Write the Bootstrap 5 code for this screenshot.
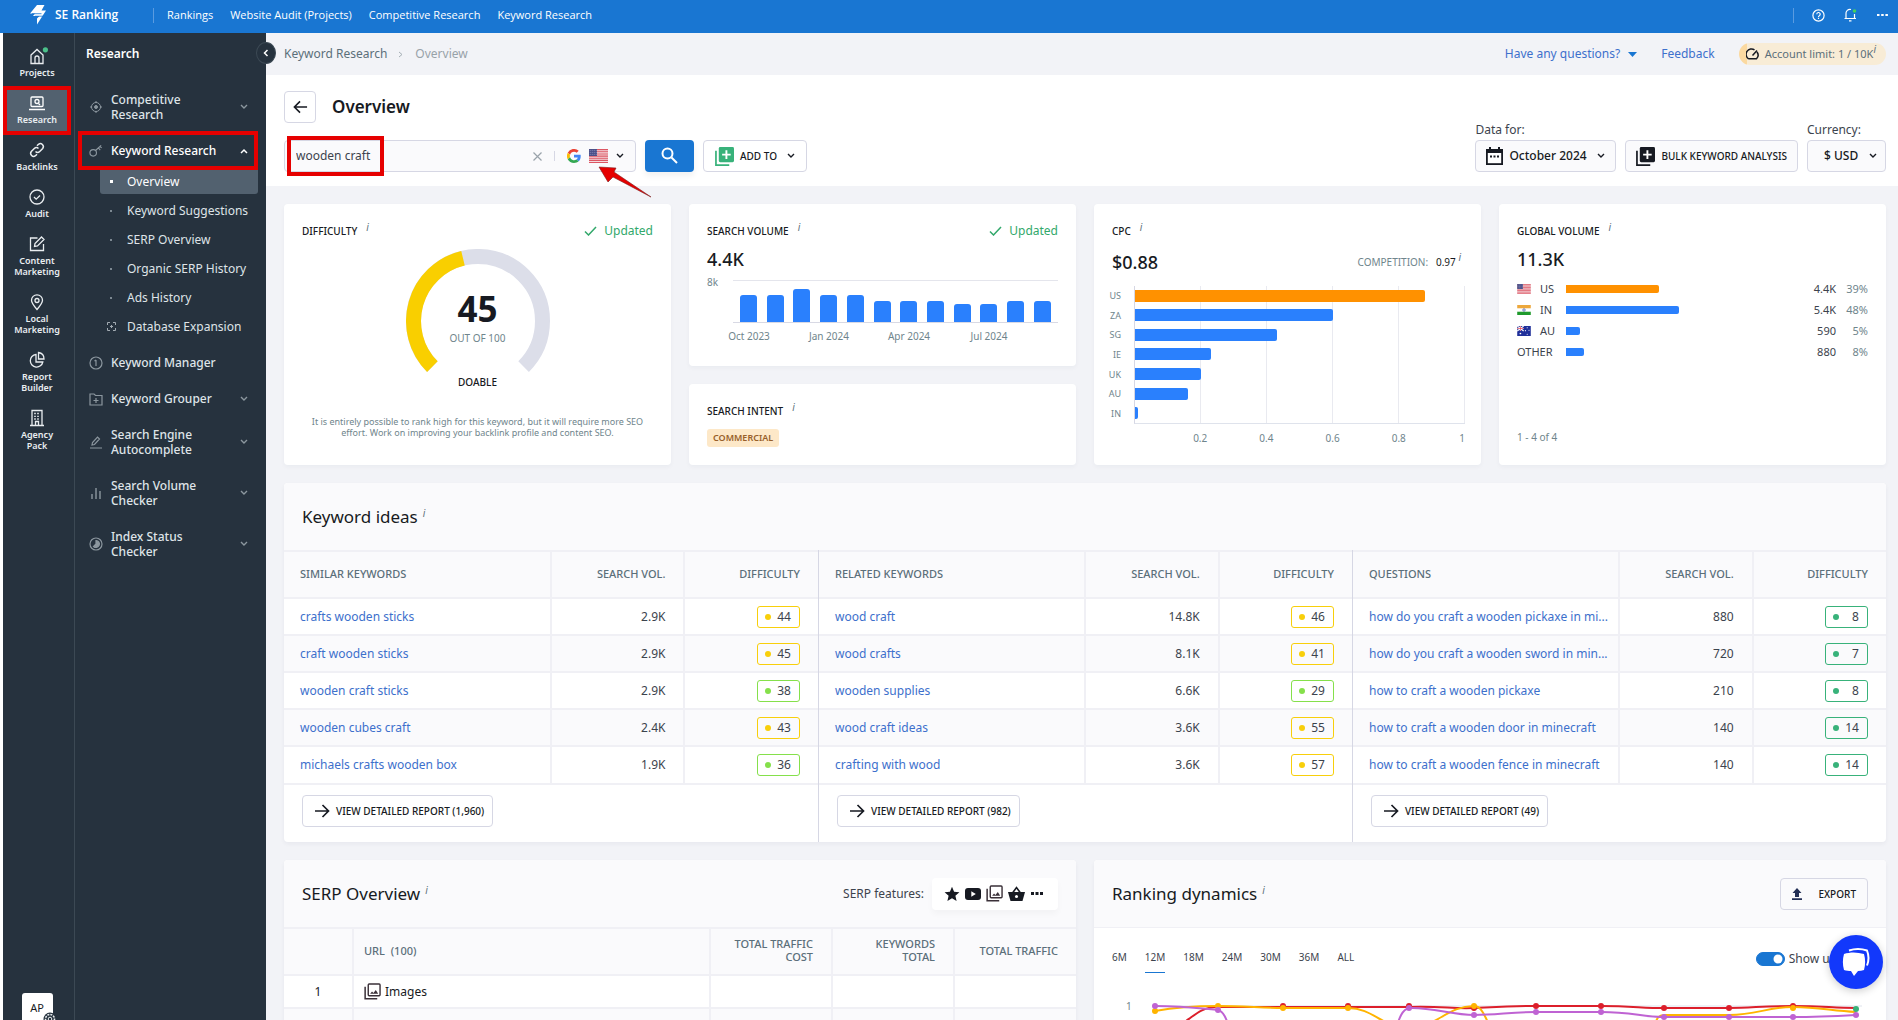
<!DOCTYPE html>
<html lang="en">
<head>
<meta charset="utf-8">
<meta name="viewport" content="width=device-width, initial-scale=1">
<title>Keyword Research – Overview</title>
<link href="https://cdn.jsdelivr.net/npm/bootstrap@5.3.0/dist/css/bootstrap.min.css" rel="stylesheet">
<style>
:root{--ink:#171a22;--slate:#5b6f7a;--line:#f0f0f5;--edge:#d6d7e4;--brand:#1976d2;--side:#26323e;--pale:#fafafc;--mark:#e60000}
html,body{height:100%}
body{font-family:"Noto Sans","Open Sans",sans-serif;font-size:12px;line-height:16px;color:var(--ink);background:#fff;overflow:hidden}
a{text-decoration:none}
svg{flex:none;display:block}
.app{height:100vh}
.shell{min-height:0;padding-left:3px}
.topbar{height:33px;background:var(--brand);font-family:"Open Sans",sans-serif;font-size:11px;font-weight:500;padding:0 10px 3px 30px}
.topbar a{color:#fff}
.brand{font-size:12px;line-height:18px;font-weight:600;width:123px}
.vline{width:1px;height:15px;background:#5a9be0}
.topnav{gap:17px;margin-left:13px}
.toptools{gap:18px}
.rail{width:72px;background:var(--side);border-right:1px solid #3c4954;padding:10px 4px 0 1px;gap:6px}
.rail a{color:#e9edf0;font-size:9px;line-height:11px;font-weight:600;text-align:center;padding:4px 0 6px;gap:2px;width:60px}
.rail a.on{background:#52616f;box-shadow:0 0 0 4px var(--mark);position:relative}
.avatar{width:31px;height:31px;background:#fff;color:var(--ink);border-radius:3px;font-size:11px;line-height:30px;text-align:center;margin-bottom:-4px}
.avatar svg{position:absolute;right:-4px;bottom:-2px}
.side{width:191px;background:var(--side);position:relative;font-size:12px;line-height:15px}
.side h2{font-size:12px;line-height:18px;font-weight:600;color:#fff;margin:0;padding:12px 11px 19px}
.side a{color:#dfe4e8;font-weight:500}
.side .grp{display:flex;align-items:center;padding:10px 18px 11px 14px;gap:8px}
.side .sub+.grp{margin-top:6px}
.side .grp>svg{color:#8c979f}
.side .grp>span+svg{margin-left:auto}
.side .grp.on{color:#fff;margin:-2px 8px -1px 3px;padding:0 6px 0 7px;height:39px;border:4px solid var(--mark);position:relative}
.side .grp.on>span+svg{color:#fff}
.side a.sub{display:flex;align-items:center;height:25px;margin:0 8px 4px 25px;font-size:12px;font-weight:400}
.side .sub i{width:27px;display:flex;justify-content:center;padding-right:5px}
.side .sub i::before{content:"";width:2px;height:2px;background:#7d8992}
.side .sub.exp i::before{display:none}
.side a.sub.on{background:#52616f;border-radius:0 0 3px 3px;color:#fff}
.side .sub.on i::before{width:3px;height:3px;background:#fff}
.fold{position:absolute;right:-10px;top:9px;width:20px;height:22px;border-radius:50%;background:var(--side);color:#fff;border:1px solid #3c4954;padding:0;display:flex;align-items:center;justify-content:center;z-index:2}
.main{background:#f2f3f7;min-width:0;overflow:hidden}
.crumbs{height:42px;padding:0 12px 0 18px;font-size:12px;color:#5b6f7a}
.crumbs .dim{color:#98a2a9}
.lnk{color:#3d70cc}
.limit{background:linear-gradient(90deg,#fbd9a0 8px,#f8ecd6 8px);border-radius:11px;height:22px;padding:0 10px 0 7px;font-size:11px;gap:6px}
.tip{font:italic 10px/10px "Noto Sans",sans-serif;color:var(--slate)}
.pagehead{background:#fff;padding:16px 12px 14px 18px}
.pagehead h1{font-size:17px;line-height:24px;font-weight:600;margin:0}
.tools{gap:9px}
.ctl{height:32px;border:1px solid var(--edge);border-radius:4px;background:#fff;display:flex;align-items:center;color:var(--ink);font-size:10px;font-weight:500;padding:0 11px;gap:6px;white-space:nowrap}
.ctl.soft{background:var(--pale)}
.ctl.month{padding:0 10px}
.ctl.back{width:32px;padding:0;justify-content:center}
.ctl.report{padding:0 8px 0 11px}
.ctl select,.ctl input{border:0;background:transparent;outline:0;font-size:12px;color:var(--ink);padding:0;min-width:0}
.ctl select{appearance:none;-webkit-appearance:none;font-weight:500;padding-right:18px;background:url("data:image/svg+xml,%3Csvg xmlns='http://www.w3.org/2000/svg' viewBox='0 0 8 6'%3E%3Cpath d='M1 1l3 3 3-3' fill='none' stroke='%23171a22' stroke-width='1.4'/%3E%3C/svg%3E") no-repeat right center/8px 6px}
.ctl.search{width:352px;gap:12px}
.search input{flex:1;color:#3c434d}
.search .sep{width:1px;height:10px;background:var(--edge)}
.engine{gap:8px}
.hl{position:absolute;left:3px;top:-4px;width:97px;height:40px;border:4px solid var(--mark);pointer-events:none}
.arrow{position:absolute;left:313px;top:24px;z-index:3;pointer-events:none}
.go{width:49px;height:32px;border:0;border-radius:4px;background:var(--brand);color:#fff;box-shadow:0 4px 6px rgba(0,0,0,.06);display:flex;align-items:center;justify-content:center;padding:0 0 2px}
.lab{font-size:12px;line-height:17px;color:#3c434d}
.tools .lab{margin-top:-2px;padding-bottom:2px}
.board{padding:18px 12px 0 18px;display:flex;flex-direction:column;gap:18px}
.tiles{display:grid;grid-template-columns:repeat(4,minmax(0,1fr));gap:18px;min-height:261px}
.stack{display:flex;flex-direction:column;gap:18px}
.tile{background:#fff;border-radius:4px;box-shadow:0 2px 4px rgba(30,40,80,.04);padding:18px;min-width:0}
.cap{font-size:10px;line-height:18px;font-weight:500;text-transform:uppercase}
.cap .tip{margin-left:9px;text-transform:none;position:relative;top:-4px}
.big{font-size:18px;line-height:22px;font-weight:500}
.okay{color:#32a86b;font-size:12px;gap:7px}
.mut{color:#6f858c}
.gauge{width:144px;height:124px;margin:9px auto 0;position:relative}
.gauge div{position:absolute;left:0;right:0;text-align:center}
.gauge .score{top:40px;font-size:35px;line-height:40px;font-weight:700}
.gauge .of{top:83px}
.small10{font-size:10px;line-height:12px}
.note{font-size:9px;line-height:11px;color:#6f858c;text-align:center;margin:25px 0 0}
.bars{display:flex;align-items:flex-end;justify-content:space-between;height:43px;border-top:1px solid #e4e5ec;border-bottom:1px solid #d8d9e4;padding:0 7px}
.bars i{width:17px;background:#2a80fd;border-radius:3px 3px 0 0}
.axis8{width:26px;margin-top:-4px}
.volplot{margin-top:10px}
.months{display:grid;grid-template-columns:repeat(4,80px);margin-left:-24px;font-size:10px;line-height:14px;text-align:center;padding-top:6px}
.intent{background:#fde8c8;color:#98602a;font-size:9px;line-height:18px;font-weight:600;padding:0 6px;border-radius:3px;width:max-content;margin-top:9px}
.cpcrow{margin:11px 0 13px}
.hb{display:grid;grid-template-columns:9px minmax(0,1fr);column-gap:13px}
.hb .names{display:flex;flex-direction:column;justify-content:space-around;font-size:9px;text-align:right;height:138px;direction:rtl}
.plot{height:138px;border-left:1px solid var(--edge);border-bottom:1px solid #dfe3ec;background:repeating-linear-gradient(90deg,transparent 0 calc(20% - 1px),#e9eaf0 calc(20% - 1px) 20%);display:flex;flex-direction:column;justify-content:space-around}
.plot i,.gv i{display:block;height:12px;background:#2a80fd;border-radius:0 2px 2px 0}
.plot i.hot,.gv i.hot{background:#ff9100}
.ticks{display:grid;grid-template-columns:2fr 2fr 2fr 2fr 1fr;font-size:10px;line-height:14px;padding-top:7px;margin-left:10%;text-align:center}
.ticks span:last-child{text-align:right}
.gv{border-collapse:collapse;width:100%;font-size:11px;line-height:14px;color:#3c434d}
.gv td{height:21px;padding:0;vertical-align:middle}
.gv i{height:8px}
.gv .c1{width:23px}.gv .c2{width:26px}.gv .c4{width:44px}.gv .c5{width:32px}
.panel{background:#fff;border-radius:4px;box-shadow:0 2px 4px rgba(30,40,80,.05);overflow:hidden;min-width:0}
.phead{height:67px;background:var(--pale);padding:0 18px;display:flex;align-items:center}
.phead h2{font-size:17px;line-height:24px;font-weight:400;margin:0}
.phead h2 .tip{position:relative;top:-6px;margin-left:5px}
.kw{table-layout:fixed;width:100%;border-collapse:collapse;font-size:12px;line-height:16px}
.kw th{background:var(--pale);height:47px;font-size:11px;line-height:13px;font-weight:500;color:var(--slate);text-transform:uppercase}
.kw td{height:37px}
.kw th,.kw td{padding:0 18px;border-top:2px solid var(--line);border-right:2px solid var(--line);text-align:right;white-space:nowrap}
.kw th,.kw th:first-child{padding-bottom:3px}
.kw th:first-child,.kw td:first-child{padding-left:16px;padding-right:4px;text-align:left;overflow:hidden;text-overflow:ellipsis}
.kw th:last-child,.kw td:last-child{border-right:0}
.kw tbody tr:nth-child(even) td{background:var(--pale)}
.kw.ideas tbody{color:#3c434d}
.kw .half{width:50%}.kw .qtr{width:25%}.kw .num{width:69px}.kw .met{width:122px}
.third+.third{border-left:1px solid var(--edge)}
.third .foot{border-top:2px solid var(--line);padding:10px 18px 15px}
.kd{display:inline-flex;align-items:center;justify-content:space-between;width:43px;height:22px;border:1px solid var(--c);border-radius:3px;padding:0 8px 0 7px;color:#3c434d;vertical-align:middle}
.kd::before{content:"";width:6px;height:6px;border-radius:50%;background:var(--c)}
.y{--c:#f8cf0b}.g{--c:#85e04b}.t{--c:#38b27a}
.halves{display:grid;grid-template-columns:repeat(2,minmax(0,1fr));gap:18px}
.feat{background:#fff;border-radius:4px;height:32px;width:126px;box-shadow:0 4px 6px rgba(0,0,0,.03);gap:5px;padding:0 12px}
.kw.serp th{white-space:normal}
.kw.serp td{height:33px}
.kw.serp td:first-child{text-align:center;padding:0}
.kw.serp .url{text-align:left;padding-left:10px}
.dyn{border-top:1px solid var(--line);padding:0 18px}
.tabs{gap:18px;font-size:10px;line-height:14px;font-weight:500}
.tabs button{border:0;background:none;padding:6px 0 8px;color:#3c434d;border-bottom:1px solid transparent}
.tabs button.on{border-color:var(--brand)}
.chart{margin-top:17px}
.form-check-input.tog{width:29px;height:14px;margin:0;background-color:var(--brand);border-color:var(--brand);background-position:right center;box-shadow:none}
.chat{position:fixed;right:15px;bottom:31px;width:54px;height:54px;border-radius:50%;border:0;background:#1238fb;box-shadow:0 2px 8px rgba(0,0,0,.2);display:flex;align-items:center;justify-content:center;padding:0}
</style>
</head>
<body>
<svg width="0" height="0" class="position-absolute" aria-hidden="true">
<defs>
<symbol id="dn" viewBox="0 0 8 6"><path d="M1 1l3 3 3-3" fill="none" stroke="currentColor" stroke-width="1.4"/></symbol>
<symbol id="up" viewBox="0 0 8 6"><path d="M1 5l3-3 3 3" fill="none" stroke="currentColor" stroke-width="1.5"/></symbol>
<symbol id="us" viewBox="0 0 19 14"><path fill="#f4dcdf" d="M0 0h19v14H0z"/><path stroke="#dc5663" stroke-width="1.1" d="M0 .6h19M0 2.8h19M0 5h19M0 7.1h19M0 9.2h19M0 11.4h19M0 13.5h19"/><path fill="#4a4f88" d="M0 0h8v7H0z"/><path stroke="#b7b9d6" stroke-width=".7" stroke-dasharray=".8 1.2" d="M.8 1.4h7M.8 3.4h7M.8 5.4h7"/></symbol>
<symbol id="in" viewBox="0 0 19 14"><path fill="#fff" d="M0 0h19v14H0z"/><path fill="#eda83c" d="M0 0h19v4.6H0z"/><path fill="#1f9a2c" d="M0 9.4h19V14H0z"/><circle cx="9.5" cy="7" r="1.7" fill="none" stroke="#3a4fa8"/></symbol>
<symbol id="au" viewBox="0 0 19 14"><path fill="#20309a" d="M0 0h19v14H0z"/><path stroke="#fff" stroke-width="1.6" d="M0 0l9 7M9 0L0 7M4.500 0v7M0 3.500h9"/><path stroke="#dc3245" stroke-width=".9" d="M4.500 0v7M0 3.500h9"/><g fill="#fff"><circle cx="4.500" cy="10.500" r="1.200"/><circle cx="14" cy="2.500" r=".8"/><circle cx="14" cy="11.500" r=".8"/><circle cx="11.500" cy="6.500" r=".8"/><circle cx="16.500" cy="6" r=".8"/></g></symbol>
<symbol id="arr" viewBox="0 0 16 14"><path d="M1 7h13M8.500 1L14.500 7l-6 6" fill="none" stroke="currentColor" stroke-width="1.700"/></symbol>
<symbol id="chk" viewBox="0 0 13 10"><path d="M1 5.500L4.500 9 12 1" fill="none" stroke="currentColor" stroke-width="1.500"/></symbol>
<symbol id="addq" viewBox="0 0 20 20"><path d="M1 4v15h14" fill="none" stroke="currentColor" stroke-width="1.800"/><rect x="4" y="0" width="16" height="16" rx="1.500" fill="currentColor"/><path d="M12 3.500v9M7.500 8h9" stroke="#fff" stroke-width="2"/></symbol>
<symbol id="imgs" viewBox="0 0 18 18"><path d="M1.200 4v12.800H14" fill="none" stroke="#3a3038" stroke-width="1.600"/><rect x="4.500" y="1" width="12.500" height="12.500" rx="1" fill="#fff" stroke="#3a3038" stroke-width="1.500"/><path d="M6.500 11.500l2-2.500 1.500 1.500 2.500-3 2.500 4z" fill="#3a3038"/></symbol>
</defs></svg>

<div class="app d-flex flex-column">
<nav class="topbar d-flex align-items-center flex-shrink-0">
  <a href="#" class="brand d-flex align-items-center gap-2"><svg width="17" height="20" viewBox="0 0 17 20" fill="#fff"><path d="M7 0h7.500l-3 5.500H16L7 19.500v-6L9.500 11H3l2-2.500H0z"/><path d="M2 8.700h9.500M5 11.200h9" stroke="#1976d2" stroke-width=".8"/></svg>SE Ranking</a>
  <span class="vline"></span>
  <div class="topnav d-flex">
    <a href="#">Rankings</a><a href="#">Website Audit (Projects)</a><a href="#">Competitive Research</a><a href="#">Keyword Research</a>
  </div>
  <div class="toptools d-flex align-items-center ms-auto text-white">
    <span class="vline"></span>
    <svg width="13" height="13" viewBox="0 0 13 13" fill="none" stroke="#fff" stroke-width="1.200"><circle cx="6.500" cy="6.500" r="5.600"/><path d="M4.800 5.200a1.700 1.700 0 1 1 2.500 1.500c-.6.300-.8.600-.8 1.200M6.500 8.800v1.200"/></svg>
    <svg width="16" height="14" viewBox="0 0 16 14" fill="none" stroke="#fff" stroke-width="1.200"><path d="M1.500 10.500h11.500M3 10.500V6a4 4 0 0 1 5-4.500M11.500 6v4.500M6 12.800h2.500"/><circle cx="11.500" cy="3" r="1.800" fill="#43d05e" stroke="none"/></svg>
    <svg width="11" height="4" viewBox="0 0 11 4" fill="#fff"><path d="M0 1h2.500v2H0zM4.200 1h2.500v2H4.200zM8.400 1h2.500v2H8.400z"/></svg>
  </div>
</nav>

<div class="shell d-flex flex-grow-1">
  <nav class="rail d-flex flex-column align-items-center flex-shrink-0">
    <a href="#" class="d-flex flex-column align-items-center"><svg width="22" height="18" viewBox="0 0 22 18" fill="none" stroke="#e9edf0" stroke-width="1.300"><path d="M5 8L11 2.500 17 8v8.500H5zM9 16v-5a2 2 0 0 1 4 0v5"/><circle cx="19.400" cy="2.800" r="2.600" fill="#4bc08a" stroke="none"/></svg>Projects</a>
    <a href="#" class="on d-flex flex-column align-items-center"><svg width="18" height="18" viewBox="0 0 18 18" fill="none" stroke="#fff" stroke-width="1.300"><rect x="3" y="3" width="12" height="9.500" rx="1"/><path d="M1 15.500h16M10.500 9.500l1.500 1.500"/><circle cx="9" cy="7.500" r="2"/></svg>Research</a>
    <a href="#" class="d-flex flex-column align-items-center"><svg width="18" height="18" viewBox="0 0 18 18" fill="none" stroke="#e9edf0" stroke-width="1.500"><path d="M7.500 10.500a3 3 0 0 0 4.200 0l3-3a3 3 0 0 0-4.200-4.200L9 4.800M10.500 7.500a3 3 0 0 0-4.200 0l-3 3a3 3 0 0 0 4.200 4.200L9 13.200"/></svg>Backlinks</a>
    <a href="#" class="d-flex flex-column align-items-center"><svg width="18" height="18" viewBox="0 0 18 18" fill="none" stroke="#e9edf0" stroke-width="1.300"><circle cx="9" cy="9" r="7"/><path d="M6 9l2.200 2.200L12 7.500"/></svg>Audit</a>
    <a href="#" class="d-flex flex-column align-items-center"><svg width="18" height="18" viewBox="0 0 18 18" fill="none" stroke="#e9edf0" stroke-width="1.300"><path d="M9.500 3H2.500v12.500h13V9M6.500 11.500l.5-3L13.500 2 16 4.500 9.500 11z"/></svg>Content<br>Marketing</a>
    <a href="#" class="d-flex flex-column align-items-center"><svg width="18" height="18" viewBox="0 0 18 18" fill="none" stroke="#e9edf0" stroke-width="1.300"><path d="M9 16.500C5.500 12.500 3.500 10 3.500 7.300a5.500 5.500 0 0 1 11 0C14.500 10 12.500 12.500 9 16.500z"/><circle cx="9" cy="7.500" r="2"/></svg>Local<br>Marketing</a>
    <a href="#" class="d-flex flex-column align-items-center"><svg width="18" height="18" viewBox="0 0 18 18" fill="none" stroke="#e9edf0" stroke-width="1.300"><path d="M8 3.500a6.300 6.300 0 1 0 6.800 7.500H8zM10.500 1.500V8H16c0-3.500-2-6-5.500-6.500z"/></svg>Report<br>Builder</a>
    <a href="#" class="d-flex flex-column align-items-center"><svg width="18" height="18" viewBox="0 0 18 18" fill="none" stroke="#e9edf0" stroke-width="1.300"><path d="M4 16.500v-15h10v15M2 16.500h14M7.500 16v-3.500h3V16"/><path stroke-dasharray="1.600 1.400" d="M6.200 4.500h6M6.200 7.300h6M6.200 10h6"/></svg>Agency<br>Pack</a>
    <div class="avatar mt-auto position-relative">AP<svg width="14" height="14" viewBox="0 0 14 14" fill="none" stroke="#e9edf0"><circle cx="7" cy="7" r="6.500" fill="#26323e" stroke="none"/><circle cx="7" cy="7" r="4.500" stroke-width="1.600" stroke-dasharray="2 1"/><circle cx="7" cy="7" r="1.800"/></svg></div>
  </nav>

  <nav class="side flex-shrink-0">
    <button class="fold" aria-label="Collapse menu"><svg width="6" height="8" viewBox="0 0 6 8"><path d="M4.500 1l-3 3 3 3" fill="none" stroke="#fff" stroke-width="1.500"/></svg></button>
    <h2>Research</h2>
    <a href="#" class="grp"><svg width="14" height="14" viewBox="0 0 14 14" fill="none" stroke="currentColor"><circle cx="7" cy="7" r="4.500"/><circle cx="7" cy="7" r="1.500" fill="currentColor"/><path d="M7 1v2M7 11v2M1 7h2M11 7h2"/></svg><span>Competitive<br>Research</span><svg width="8" height="6"><use href="#dn"/></svg></a>
    <a href="#" class="grp on"><svg width="14" height="14" viewBox="0 0 15 14" fill="none" stroke="currentColor" stroke-width="1.200"><circle cx="4.500" cy="9" r="3.500"/><path d="M7 6.500L13 1M10 3.500l2 2.500M12 2l1.500 1.800"/></svg><span class="text-nowrap">Keyword Research</span><svg width="8" height="6"><use href="#up"/></svg></a>
    <a href="#" class="sub on"><i></i>Overview</a>
    <a href="#" class="sub"><i></i>Keyword Suggestions</a>
    <a href="#" class="sub"><i></i>SERP Overview</a>
    <a href="#" class="sub"><i></i>Organic SERP History</a>
    <a href="#" class="sub"><i></i>Ads History</a>
    <a href="#" class="sub exp"><i><svg width="9" height="9" viewBox="0 0 9 9" fill="none" stroke="#a2abb2"><path d="M.5 3V.5H3M6 .5h2.500V3M8.500 6v2.500H6M3 8.500H.5V6M4.500 3v3M3 4.500h3"/></svg></i>Database Expansion</a>
    <a href="#" class="grp"><svg width="14" height="14" viewBox="0 0 14 14" fill="none" stroke="currentColor" stroke-width="1.200"><circle cx="7" cy="7" r="6"/><path d="M7 4v6M5.500 5L7 4"/></svg><span class="text-nowrap">Keyword Manager</span></a>
    <a href="#" class="grp"><svg width="14" height="14" viewBox="0 0 14 14" fill="none" stroke="currentColor" stroke-width="1.200"><path d="M1 2h4l1.500 1.500H13V13H1zM7 6v5M4.500 8.500h5"/></svg><span class="text-nowrap">Keyword Grouper</span><svg width="8" height="6"><use href="#dn"/></svg></a>
    <a href="#" class="grp"><svg width="14" height="14" viewBox="0 0 14 14" fill="none" stroke="currentColor" stroke-width="1.200"><path d="M3 10l.5-2.500 5-5.500 2 2-5 5.500zM1 13h12"/></svg><span>Search Engine<br>Autocomplete</span><svg width="8" height="6"><use href="#dn"/></svg></a>
    <a href="#" class="grp"><svg width="14" height="14" viewBox="0 0 14 14" fill="none" stroke="currentColor" stroke-width="1.400"><path d="M3 13V8M7 13V2M11 13V5"/></svg><span>Search Volume<br>Checker</span><svg width="8" height="6"><use href="#dn"/></svg></a>
    <a href="#" class="grp"><svg width="14" height="14" viewBox="0 0 14 14" fill="none" stroke="currentColor" stroke-width="1.200"><circle cx="7" cy="7" r="6"/><path fill="currentColor" d="M7 3.500a3.500 3.500 0 1 1-2.500 6L7 7z"/></svg><span>Index Status<br>Checker</span><svg width="8" height="6"><use href="#dn"/></svg></a>
  </nav>

  <main class="main flex-grow-1">
    <div class="crumbs d-flex align-items-center">
      <span>Keyword Research</span><svg class="mx-2" width="12" height="7" viewBox="0 0 12 7"><path d="M4 1l3 2.500L4 6" fill="none" stroke="#a5afb5"/></svg><span class="dim">Overview</span>
      <div class="ms-auto d-flex align-items-center">
        <a href="#" class="lnk d-flex align-items-center">Have any questions?<svg class="ms-2" width="9" height="5" viewBox="0 0 9 5"><path d="M0 0h9L4.500 5z" fill="#1976d2"/></svg></a>
        <a href="#" class="lnk ms-4 me-4">Feedback</a>
        <span class="limit d-flex align-items-center"><svg width="13" height="12" viewBox="0 0 13 12" fill="none" stroke="#171a22" stroke-width="1.500"><path d="M2.500 10.800a5.300 5.300 0 0 1 6-9M11 4a5.300 5.300 0 0 1-.5 6.800h-8M6.500 7.500L11 2.500"/></svg><span>Account limit: 1 / 10K<sup class="tip">i</sup></span></span>
      </div>
    </div>

    <header class="pagehead">
      <div class="d-flex align-items-center gap-3">
        <button class="ctl back" aria-label="Back"><svg width="15" height="14" viewBox="0 0 16 14"><path d="M15 7H2M7.500 1L1.500 7l6 6" fill="none" stroke="#171a22" stroke-width="1.700"/></svg></button>
        <h1>Overview</h1>
      </div>
      <div class="tools d-flex align-items-end pt-0">
        <div class="position-relative mt-3">
          <div class="ctl soft search">
            <input type="text" value="wooden craft" aria-label="Keyword">
            <svg width="9" height="9" viewBox="0 0 9 9"><path d="M.5.5l8 8M8.500.5l-8 8" stroke="#9aa3ab" stroke-width="1.200"/></svg>
            <span class="sep"></span>
            <span class="engine d-flex align-items-center">
            <svg width="14" height="14" viewBox="0 0 48 48"><path fill="#ea4335" d="M24 9.500c3.500 0 6.700 1.200 9.200 3.600l6.900-6.900A24 24 0 0 0 2.600 13.200l8 6.200C12.400 13.700 17.700 9.500 24 9.500z"/><path fill="#4285f4" d="M47 24.500c0-1.600-.2-3.100-.4-4.500H24v9h12.900c-.6 3-2.200 5.500-4.800 7.200l7.700 6C44.400 38 47 31.800 47 24.500z"/><path fill="#fbbc05" d="M10.500 28.600a14.500 14.500 0 0 1 0-9.200l-8-6.200a24 24 0 0 0 0 21.600z"/><path fill="#34a853" d="M24 48c6.500 0 11.900-2.100 15.900-5.800l-7.700-6A14.500 14.500 0 0 1 10.500 28.600l-8 6.200C6.500 42.600 14.600 48 24 48z"/></svg>
            <svg width="19" height="14"><use href="#us"/></svg>
            <svg width="8" height="6"><use href="#dn"/></svg></span>
          </div>
          <span class="hl"></span>
          <svg class="arrow" width="58" height="36" viewBox="0 0 58 36"><path d="M2 3l17 1-2 4 37 25L16 13l-5 5z" fill="#e60000" stroke="#7a1f1f" stroke-width=".6"/></svg>
        </div>
        <button class="go" aria-label="Search"><svg width="17" height="17" viewBox="0 0 17 17" fill="none" stroke="#fff" stroke-width="2"><circle cx="6.500" cy="6.500" r="5"/><path d="M10.500 10.500l5.500 5.500"/></svg></button>
        <button class="ctl"><svg width="19" height="19" color="#38b27a"><use href="#addq"/></svg>ADD TO<svg class="ms-1" width="8" height="6"><use href="#dn"/></svg></button>
        <div class="ms-auto"><label class="lab d-block" for="month">Data for:</label>
          <div class="ctl soft month"><svg width="17" height="18" viewBox="0 0 17 18"><path fill="#171a22" d="M0 2h17v16H0z"/><path fill="#fff" d="M1.800 6h13.400v10.200H1.800z"/><path fill="#171a22" d="M3 0h2v3H3zM12 0h2v3h-2z"/><path stroke="#171a22" stroke-width="2" stroke-dasharray="2 1.500" d="M4 9.500h9.500"/></svg><select id="month"><option>October 2024</option></select></div></div>
        <button class="ctl soft month"><svg width="19" height="19"><use href="#addq"/></svg>BULK KEYWORD ANALYSIS</button>
        <div><label class="lab d-block" for="cur">Currency:</label>
          <div class="ctl soft px-2 ps-3"><select id="cur"><option>$ USD</option></select></div></div>
      </div>
    </header>

    <div class="board">
      <div class="tiles">
        <section class="tile">
          <div class="d-flex justify-content-between"><span class="cap">Difficulty<sup class="tip">i</sup></span><span class="okay d-flex align-items-center"><svg width="13" height="10"><use href="#chk"/></svg>Updated</span></div>
          <div class="gauge"><svg width="144" height="124" viewBox="0 0 144 124" fill="none" stroke-width="15"><path stroke="#dcdee9" d="M26.400 117.600A64.500 64.500 0 1 1 117.600 117.600"/><path stroke="#f9cf00" d="M26.400 117.600A64.500 64.500 0 0 1 57 9.300"/></svg><div class="score">45</div><div class="of small10 mut">OUT OF 100</div></div>
          <div class="cap text-center">Doable</div>
          <p class="note">It is entirely possible to rank high for this keyword, but it will require more SEO effort. Work on improving your backlink profile and content SEO.</p>
        </section>
        <div class="stack">
          <section class="tile flex-grow-1">
            <div class="d-flex justify-content-between"><span class="cap">Search volume<sup class="tip">i</sup></span><span class="okay d-flex align-items-center"><svg width="13" height="10"><use href="#chk"/></svg>Updated</span></div>
            <div class="big mt-2">4.4K</div>
            <div class="volplot d-flex"><span class="axis8 mut small10">8k</span><div class="flex-grow-1">
              <div class="bars"><i style="height:65%"></i><i style="height:65%"></i><i style="height:80%"></i><i style="height:65%"></i><i style="height:65%"></i><i style="height:52%"></i><i style="height:52%"></i><i style="height:52%"></i><i style="height:44%"></i><i style="height:44%"></i><i style="height:52%"></i><i style="height:52%"></i></div>
              <div class="months mut"><span>Oct 2023</span><span>Jan 2024</span><span>Apr 2024</span><span>Jul 2024</span></div></div></div>
          </section>
          <section class="tile"><div class="cap">Search intent<sup class="tip">i</sup></div><div class="intent">COMMERCIAL</div></section>
        </div>
        <section class="tile pe-3">
          <div class="cap">CPC<sup class="tip">i</sup></div>
          <div class="cpcrow d-flex justify-content-between align-items-center"><span class="big">$0.88</span><span class="small10 pe-1"><span class="mut">COMPETITION:</span> &nbsp; 0.97 <sup class="tip">i</sup></span></div>
          <div class="hb"><div class="names mut"><span>US</span><span>ZA</span><span>SG</span><span>IE</span><span>UK</span><span>AU</span><span>IN</span></div>
          <div class="plot"><i class="hot" style="width:88%"></i><i style="width:60%"></i><i style="width:43%"></i><i style="width:23%"></i><i style="width:20%"></i><i style="width:16%"></i><i style="width:1%"></i></div>
          <span></span><div class="ticks mut"><span>0.2</span><span>0.4</span><span>0.6</span><span>0.8</span><span>1</span></div></div>
        </section>
        <section class="tile d-flex flex-column">
          <div class="cap">Global volume<sup class="tip">i</sup></div>
          <div class="big mt-2 mb-2">11.3K</div>
          <table class="gv"><colgroup><col class="c1"><col class="c2"><col><col class="c4"><col class="c5"></colgroup>
            <tbody><tr><td><svg width="14" height="10"><use href="#us"/></svg></td><td>US</td><td><i class="hot" style="width:41%"></i></td><td class="text-end">4.4K</td><td class="text-end mut">39%</td></tr>
            <tr><td><svg width="14" height="10"><use href="#in"/></svg></td><td>IN</td><td><i style="width:50%"></i></td><td class="text-end">5.4K</td><td class="text-end mut">48%</td></tr>
            <tr><td><svg width="14" height="10"><use href="#au"/></svg></td><td>AU</td><td><i style="width:6%"></i></td><td class="text-end">590</td><td class="text-end mut">5%</td></tr>
            <tr><td colspan="2">OTHER</td><td><i style="width:8%"></i></td><td class="text-end">880</td><td class="text-end mut">8%</td></tr></tbody></table>
          <div class="small10 mut mt-auto mb-1">1 - 4 of 4</div>
        </section>
      </div>

      <section class="panel">
        <div class="phead"><h2>Keyword ideas<sup class="tip">i</sup></h2></div>
        <div class="row g-0">
          <div class="col-4 third">
            <table class="kw ideas"><colgroup><col class="half"><col class="qtr"><col class="qtr"></colgroup><thead><tr><th>Similar keywords</th><th>Search vol.</th><th>Difficulty</th></tr></thead><tbody>
            <tr><td><a class="lnk" href="#">crafts wooden sticks</a></td><td>2.9K</td><td><span class="kd y">44</span></td></tr>
            <tr><td><a class="lnk" href="#">craft wooden sticks</a></td><td>2.9K</td><td><span class="kd y">45</span></td></tr>
            <tr><td><a class="lnk" href="#">wooden craft sticks</a></td><td>2.9K</td><td><span class="kd g">38</span></td></tr>
            <tr><td><a class="lnk" href="#">wooden cubes craft</a></td><td>2.4K</td><td><span class="kd y">43</span></td></tr>
            <tr><td><a class="lnk" href="#">michaels crafts wooden box</a></td><td>1.9K</td><td><span class="kd g">36</span></td></tr></tbody></table>
            <div class="foot"><button class="ctl report"><svg width="16" height="14"><use href="#arr"/></svg>VIEW DETAILED REPORT (1,960)</button></div>
          </div>
          <div class="col-4 third">
            <table class="kw ideas"><colgroup><col class="half"><col class="qtr"><col class="qtr"></colgroup><thead><tr><th>Related keywords</th><th>Search vol.</th><th>Difficulty</th></tr></thead><tbody>
            <tr><td><a class="lnk" href="#">wood craft</a></td><td>14.8K</td><td><span class="kd y">46</span></td></tr>
            <tr><td><a class="lnk" href="#">wood crafts</a></td><td>8.1K</td><td><span class="kd y">41</span></td></tr>
            <tr><td><a class="lnk" href="#">wooden supplies</a></td><td>6.6K</td><td><span class="kd g">29</span></td></tr>
            <tr><td><a class="lnk" href="#">wood craft ideas</a></td><td>3.6K</td><td><span class="kd y">55</span></td></tr>
            <tr><td><a class="lnk" href="#">crafting with wood</a></td><td>3.6K</td><td><span class="kd y">57</span></td></tr></tbody></table>
            <div class="foot"><button class="ctl report"><svg width="16" height="14"><use href="#arr"/></svg>VIEW DETAILED REPORT (982)</button></div>
          </div>
          <div class="col-4 third">
            <table class="kw ideas"><colgroup><col class="half"><col class="qtr"><col class="qtr"></colgroup><thead><tr><th>Questions</th><th>Search vol.</th><th>Difficulty</th></tr></thead><tbody>
            <tr><td><a class="lnk" href="#">how do you craft a wooden pickaxe in mi...</a></td><td>880</td><td><span class="kd t">8</span></td></tr>
            <tr><td><a class="lnk" href="#">how do you craft a wooden sword in min...</a></td><td>720</td><td><span class="kd t">7</span></td></tr>
            <tr><td><a class="lnk" href="#">how to craft a wooden pickaxe</a></td><td>210</td><td><span class="kd t">8</span></td></tr>
            <tr><td><a class="lnk" href="#">how to craft a wooden door in minecraft</a></td><td>140</td><td><span class="kd t">14</span></td></tr>
            <tr><td><a class="lnk" href="#">how to craft a wooden fence in minecraft</a></td><td>140</td><td><span class="kd t">14</span></td></tr></tbody></table>
            <div class="foot"><button class="ctl report"><svg width="16" height="14"><use href="#arr"/></svg>VIEW DETAILED REPORT (49)</button></div>
          </div>
        </div>
      </section>

      <div class="halves">
        <section class="panel">
          <div class="phead"><h2>SERP Overview<sup class="tip">i</sup></h2><span class="ms-auto me-2 lab">SERP features:</span>
            <div class="feat d-flex align-items-center">
              <svg width="16" height="16" viewBox="0 0 16 16"><path fill="#171a22" d="M8 .8l2.100 5 5.300.4-4 3.500 1.200 5.300L8 12.200 3.400 15l1.200-5.300-4-3.500 5.300-.4z"/></svg>
              <svg width="16" height="12" viewBox="0 0 16 12"><rect width="16" height="12" rx="3" fill="#171a22"/><path fill="#fff" d="M6.300 3.300v5.400L10.800 6z"/></svg>
              <svg width="17" height="17"><use href="#imgs"/></svg>
              <svg width="17" height="16" viewBox="0 0 17 16"><path d="M4.500 7l4-5.500 4 5.500" fill="none" stroke="#171a22" stroke-width="1.600"/><path fill="#171a22" d="M0 6h17l-2.500 9h-12z"/><circle cx="8.500" cy="10.500" r="1.500" fill="#fff"/></svg>
              <svg width="13" height="3" viewBox="0 0 13 3"><path fill="#171a22" d="M1 0h3v3H1zM5.500 0h3v3h-3zM10 0h3v3h-3z"/></svg>
            </div></div>
          <table class="kw serp"><colgroup><col class="num"><col><col class="met"><col class="met"><col class="met"></colgroup><thead><tr><th></th><th class="url">URL&nbsp; (100)</th><th>Total traffic cost</th><th>Keywords total</th><th>Total traffic</th></tr></thead><tbody>
          <tr><td>1</td><td class="url"><span class="d-flex align-items-center gap-1"><svg width="17" height="17"><use href="#imgs"/></svg>Images</span></td><td></td><td></td><td></td></tr>
          <tr><td></td><td></td><td></td><td></td><td></td></tr></tbody></table>
        </section>
        <section class="panel">
          <div class="phead"><h2>Ranking dynamics<sup class="tip">i</sup></h2><button class="ctl ms-auto soft gap-3"><svg width="10" height="12" viewBox="0 0 10 12" fill="#232f55"><path d="M5 0l4.500 5H7v4H3V5H.5zM0 10.200h10V12H0z"/></svg>EXPORT</button></div>
          <div class="dyn">
            <div class="d-flex align-items-center pt-3">
              <div class="tabs d-flex"><button>6M</button><button class="on">12M</button><button>18M</button><button>24M</button><button>30M</button><button>36M</button><button>ALL</button></div>
              <div class="form-check form-switch ms-auto d-flex align-items-center gap-1 p-0 m-0"><input class="form-check-input tog" type="checkbox" role="switch" id="upd" checked><label class="lab text-nowrap" for="upd">Show updates</label></div>
            </div>
            <svg class="chart" width="100%" height="60" viewBox="0 0 756 60" preserveAspectRatio="none">
              <text x="14" y="20" font-size="10" fill="#6f858c">1</text>
              <path d="M40 16H750" stroke="#dfe3ec"/>
              <g fill="none" stroke-width="2">
                <path stroke="#dc1f2b" d="M70 34C84 24 90 17 106 17H297C330 16 340 19 362 18S400 16 424 16H489C520 16 530 18 552 18H617C640 18 650 16 681 16S720 18 744 18"/>
                <path stroke="#ffb400" d="M43 21C65 17 80 16 106 16S150 18 171 18H236C262 18 270 38 297 38S335 16 362 16C374 16 374 40 390 50M540 40C545 30 545 25 552 25H617C645 25 655 17 681 17S720 21 744 22"/>
                <path stroke="#bf63d3" d="M43 16C70 16 85 18 106 20C114 22 116 36 122 50M280 50C286 34 288 20 297 18C320 17 340 25 362 25S400 22 424 22H489C520 22 530 27 552 27H681C705 27 725 26 744 25"/>
              </g>
              <g fill="#dc1f2b"><circle cx="171" cy="16" r="3"/><circle cx="236" cy="16" r="3"/><circle cx="297" cy="16" r="3"/><circle cx="362" cy="18" r="3"/><circle cx="424" cy="16" r="3"/><circle cx="489" cy="16" r="3"/><circle cx="552" cy="18" r="3"/><circle cx="617" cy="18" r="3"/><circle cx="681" cy="16" r="3"/></g>
              <circle cx="744" cy="19" r="3" fill="#38b27a"/>
              <g fill="#ffb400"><circle cx="43" cy="21" r="3"/><circle cx="106" cy="16" r="3"/><circle cx="171" cy="18" r="3"/><circle cx="236" cy="18" r="3"/><circle cx="362" cy="16" r="3"/><circle cx="681" cy="18" r="3"/></g>
              <g fill="#bf63d3"><circle cx="43" cy="16" r="3"/><circle cx="106" cy="20" r="3"/><circle cx="297" cy="18" r="3"/><circle cx="362" cy="25" r="3"/><circle cx="424" cy="22" r="3"/><circle cx="489" cy="22" r="3"/><circle cx="552" cy="27" r="3"/><circle cx="617" cy="27" r="3"/><circle cx="681" cy="27" r="3"/><circle cx="744" cy="25" r="3"/></g>
            </svg>
          </div>
        </section>
      </div>
    </div>
  </main>
</div>
</div>
<button class="chat" aria-label="Open chat"><svg width="30" height="30" viewBox="0 0 30 30"><path d="M8 3.500c6-2 12-2 18 0 2 5 2 10 0 15" fill="none" stroke="#fff" stroke-width="2"/><path fill="#fff" d="M3 7c6-2 13-2 20 0 1.500 5 1.500 11 0 16-2 .7-4 1-6 1l-4 5-3-5c-2 0-5-.3-7-1-1.500-5-1.500-11 0-16z"/></svg></button>
<script src="https://cdn.jsdelivr.net/npm/bootstrap@5.3.0/dist/js/bootstrap.bundle.min.js"></script>
</body>
</html>
